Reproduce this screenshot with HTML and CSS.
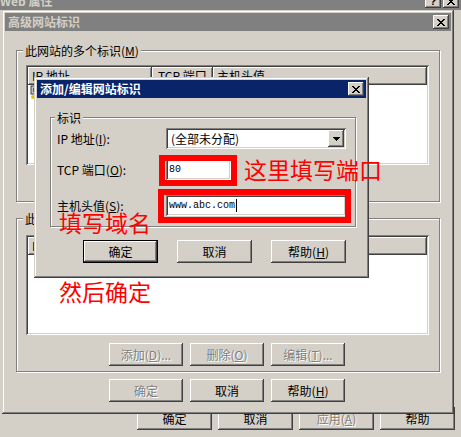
FILE: index.html
```html
<!DOCTYPE html>
<html lang="zh-CN">
<head>
    <meta charset="UTF-8">
    <meta name="viewport" content="width=device-width, initial-scale=1.0">
    <title>高级网站标识</title>
    <link rel="stylesheet" href="styles.css">
</head>
<body>
<div class="desk">

    <!-- back window: site properties -->
    <div class="window win-props">
        <div class="titlebar inactive">
            <span class="title">Web 属性</span>
            <div class="title-btns">
                <span class="title-btn">?</span>
                <span class="title-btn">
                    <svg width="8" height="7" viewBox="0 0 8 7" shape-rendering="crispEdges"><path fill="#000" d="M0 0h2v1h-2z M6 0h2v1h-2z M1 1h2v1h-2z M5 1h2v1h-2z M2 2h4v1h-4z M3 3h2v1h-2z M2 4h4v1h-4z M1 5h2v1h-2z M5 5h2v1h-2z M0 6h2v1h-2z M6 6h2v1h-2z"/></svg>
                </span>
            </div>
        </div>
        <div class="props-footer">
            <button class="btn btn-wide">确定</button>
            <button class="btn btn-wide">取消</button>
            <button class="btn btn-wide" disabled>应用(<u>A</u>)</button>
            <button class="btn btn-wide">帮助</button>
        </div>
    </div>

    <!-- middle window: advanced identities -->
    <div class="window win-advanced">
        <div class="titlebar inactive">
            <span class="title">高级网站标识</span>
            <span class="title-btn">
                <svg width="8" height="7" viewBox="0 0 8 7" shape-rendering="crispEdges"><path fill="#000" d="M0 0h2v1h-2z M6 0h2v1h-2z M1 1h2v1h-2z M5 1h2v1h-2z M2 2h4v1h-4z M3 3h2v1h-2z M2 4h4v1h-4z M1 5h2v1h-2z M5 5h2v1h-2z M0 6h2v1h-2z M6 6h2v1h-2z"/></svg>
            </span>
        </div>
        <div class="advanced-body">
            <div class="group group-http">
                <span class="legend">此网站的多个标识(<u>M</u>)</span>
                <div class="list">
                    <div class="list-head">
                        <span class="col col-ip">IP 地址</span>
                        <span class="col col-port">TCP 端口</span>
                        <span class="col col-host">主机头值</span>
                    </div>
                    <div class="list-row">
                        <svg width="16" height="16" viewBox="0 0 16 16">
                            <rect x="1" y="1" width="11" height="8" fill="#c0c0c0" stroke="#404040"/>
                            <rect x="3" y="3" width="7" height="4" fill="#008080"/>
                            <circle cx="3" cy="12" r="2" fill="#e8c000"/>
                        </svg>
                    </div>
                </div>
                <div class="group-buttons">
                    <button class="btn">添加(<u>D</u>)...</button>
                    <button class="btn">删除(<u>R</u>)</button>
                    <button class="btn">编辑(<u>I</u>)...</button>
                </div>
            </div>

            <div class="group group-ssl">
                <span class="legend">此网站的多个 SSL 标识(<u>S</u>)</span>
                <div class="list">
                    <div class="list-head">
                        <span class="col col-ip">IP 地址</span>
                        <span class="col col-port">SSL 端口</span>
                        <span class="col col-host"></span>
                    </div>
                </div>
                <div class="group-buttons">
                    <button class="btn" disabled>添加(<u>D</u>)...</button>
                    <button class="btn" disabled>删除(<u>O</u>)</button>
                    <button class="btn" disabled>编辑(<u>T</u>)...</button>
                </div>
            </div>

            <div class="main-buttons">
                <button class="btn" disabled>确定</button>
                <button class="btn">取消</button>
                <button class="btn">帮助(<u>H</u>)</button>
            </div>
        </div>
    </div>

    <!-- front window: add / edit identity -->
    <div class="window win-edit">
        <div class="titlebar active">
            <span class="title">添加/编辑网站标识</span>
            <span class="title-btn">
                <svg width="8" height="7" viewBox="0 0 8 7" shape-rendering="crispEdges"><path fill="#000" d="M0 0h2v1h-2z M6 0h2v1h-2z M1 1h2v1h-2z M5 1h2v1h-2z M2 2h4v1h-4z M3 3h2v1h-2z M2 4h4v1h-4z M1 5h2v1h-2z M5 5h2v1h-2z M0 6h2v1h-2z M6 6h2v1h-2z"/></svg>
            </span>
        </div>
        <div class="edit-body">
            <div class="group group-ident">
                <span class="legend">标识</span>
                <div class="field-row row-ip">
                    <span class="field-label">IP 地址(<u>I</u>):</span>
                    <div class="field combo">
                        <span>(全部未分配)</span>
                        <span class="drop">
                            <svg width="7" height="4" viewBox="0 0 7 4" shape-rendering="crispEdges"><path fill="#000" d="M0 0h7v1h-7z M1 1h5v1h-5z M2 2h3v1h-3z M3 3h1v1h-1z"/></svg>
                        </span>
                    </div>
                </div>
                <div class="field-row row-port">
                    <span class="field-label">TCP 端口(<u>O</u>):</span>
                    <div class="field input-port"><span class="mono">80</span></div>
                </div>
                <div class="field-row row-host">
                    <span class="field-label">主机头值(<u>S</u>):</span>
                    <div class="field input-host"><span class="mono">www.abc.com</span><span class="caret"></span></div>
                </div>
            </div>
            <div class="edit-buttons">
                <button class="btn btn-wide btn-default">确定</button>
                <button class="btn btn-wide">取消</button>
                <button class="btn btn-wide">帮助(<u>H</u>)</button>
            </div>
        </div>
    </div>

    <!-- red notes drawn over the screenshot -->
    <div class="mark mark-port"></div>
    <div class="mark mark-host"></div>
    <div class="note note-port">这里填写端口</div>
    <div class="note note-domain">填写域名</div>
    <div class="note note-confirm">然后确定</div>

</div>
</body>
</html>
```

FILE: styles.css
```css
body {
    margin: 0;
    background: #d4d0c8;
    font-family: "Noto Sans CJK SC", sans-serif;
    font-size: 12px;
    color: #000;
}

.desk {
    position: relative;
    width: 461px;
    height: 437px;
    overflow: hidden;
}

/* classic window frame */
.window {
    position: absolute;
    box-sizing: border-box;
    display: flex;
    flex-direction: column;
    padding: 3px;
    background: #d4d0c8;
    box-shadow: inset -1px -1px #404040, inset 1px 1px #d4d0c8, inset -2px -2px #808080, inset 2px 2px #fff;
}

.win-props {
    left: -3px;
    top: -11px;
    width: 467px;
    height: 455px;
}

.win-advanced {
    left: 2px;
    top: 10px;
    width: 452px;
    height: 404px;
}

.win-edit {
    left: 34px;
    top: 77px;
    width: 335px;
    height: 201px;
}

.titlebar {
    flex-shrink: 0;
    display: flex;
    align-items: center;
    justify-content: space-between;
    height: 18px;
    padding: 0 2px 0 3px;
}

.win-props .titlebar {
    padding-left: 0;
}

.titlebar.inactive {
    background: #808080;
    color: #d4d0c8;
}

.titlebar.active {
    background: #0a246a;
    color: #fff;
}

.title {
    font-weight: bold;
    line-height: 18px;
    white-space: nowrap;
}

.title-btns {
    display: flex;
    gap: 2px;
}

.title-btn {
    box-sizing: border-box;
    display: flex;
    align-items: center;
    justify-content: center;
    width: 16px;
    height: 14px;
    background: #d4d0c8;
    box-shadow: inset -1px -1px #404040, inset 1px 1px #fff, inset -2px -2px #808080;
    color: #000;
    font-family: "Liberation Sans", sans-serif;
    font-weight: bold;
    font-size: 11px;
    line-height: 14px;
}

/* buttons */
.btn {
    box-sizing: border-box;
    width: 74px;
    height: 23px;
    padding: 0;
    border: 0;
    background: #d4d0c8;
    box-shadow: inset -1px -1px #404040, inset 1px 1px #fff, inset -2px -2px #808080;
    font-family: "Noto Sans CJK SC", sans-serif;
    font-size: 12px;
    color: #000;
}

.btn-wide {
    width: 75px;
}

.btn-default {
    box-shadow: inset 0 0 0 1px #000, inset -2px -2px #404040, inset 2px 2px #fff, inset -3px -3px #808080;
}

.btn:disabled {
    color: #808080;
    text-shadow: 1px 1px 0 #fff;
}

.props-footer {
    display: flex;
    justify-content: flex-end;
    gap: 6px;
    margin-top: auto;
    padding: 0 6px 11px 0;
}

/* etched group boxes */
.group {
    border: 1px solid #808080;
    box-shadow: inset 1px 1px #fff, 1px 1px #fff;
}

.legend {
    display: block;
    width: max-content;
    height: 13px;
    margin-top: -7px;
    padding: 0 2px;
    background: #d4d0c8;
    line-height: 13px;
    white-space: nowrap;
}

.advanced-body {
    padding: 19px 11px 0 11px;
}

.group-http,
.group-ssl {
    padding: 0 10px 6px 9px;
}

.group-http .legend,
.group-ssl .legend {
    margin-left: -3px;
}

.group-http .list {
    margin-top: 8px;
}

.group-ssl {
    margin-top: 16px;
    padding-bottom: 5px;
}

.group-ssl .list {
    margin-top: 10px;
}

/* list views */
.list {
    box-sizing: border-box;
    height: 100px;
    padding: 2px;
    background: #fff;
    box-shadow: inset 1px 1px #808080, inset -1px -1px #fff, inset 2px 2px #404040, inset -2px -2px #d4d0c8;
}

.list-head {
    display: flex;
    height: 18px;
}

.col {
    box-sizing: border-box;
    height: 18px;
    padding-left: 4px;
    background: #d4d0c8;
    box-shadow: inset -1px -1px #404040, inset 1px 1px #fff, inset -2px -2px #808080;
    line-height: 18px;
    white-space: nowrap;
}

.col-ip {
    width: 124px;
}

.col-port {
    width: 61px;
    padding-left: 6px;
}

.col-host {
    flex: 1;
}

.list-row {
    display: flex;
    align-items: center;
    height: 16px;
    padding-left: 2px;
}

.group-buttons {
    display: flex;
    gap: 7px;
    margin-top: 7px;
    padding-left: 83px;
}

.group-ssl .group-buttons {
    margin-top: 8px;
}

.main-buttons {
    display: flex;
    gap: 7px;
    margin-top: 7px;
    padding-left: 93px;
}

/* add / edit dialog */
.edit-body {
    padding: 19px 10px 0 13px;
}

.group-ident {
    padding: 0 9px 10px 6px;
}

.group-ident .legend {
    margin-left: -2px;
}

.field-row {
    display: flex;
    align-items: center;
    height: 21px;
}

.row-ip {
    margin-top: 4px;
}

.row-port {
    margin-top: 10px;
}

.row-host {
    margin-top: 15px;
}

.field-label {
    width: 109px;
    white-space: nowrap;
}

.field {
    box-sizing: border-box;
    display: flex;
    align-items: center;
    height: 21px;
    padding: 0 2px 0 3px;
    background: #fff;
    box-shadow: inset 1px 1px #808080, inset -1px -1px #fff, inset 2px 2px #404040, inset -2px -2px #d4d0c8;
    white-space: nowrap;
}

.combo {
    width: 180px;
    padding-left: 5px;
}

.drop {
    box-sizing: border-box;
    display: flex;
    align-items: center;
    justify-content: center;
    width: 16px;
    height: 17px;
    margin-left: auto;
    background: #d4d0c8;
    box-shadow: inset -1px -1px #404040, inset 1px 1px #fff, inset -2px -2px #808080;
}

.input-port {
    width: 65px;
}

.input-host {
    width: 180px;
}

.mono {
    font-family: "Liberation Mono", monospace;
    font-size: 10px;
}

.caret {
    width: 1px;
    height: 13px;
    margin-left: 1px;
    background: #000;
}

.edit-buttons {
    display: flex;
    gap: 19px;
    margin-top: 13px;
    padding-left: 33px;
}

/* red annotations */
.mark {
    position: absolute;
    box-sizing: border-box;
    border: 6px solid #f00;
}

.mark-port {
    left: 159px;
    top: 155px;
    width: 78px;
    height: 31px;
}

.mark-host {
    left: 158px;
    top: 189px;
    width: 193px;
    height: 34px;
}

.note {
    position: absolute;
    color: #f00;
    font-size: 23px;
    line-height: 1;
    white-space: nowrap;
}

.note-port {
    left: 244px;
    top: 158px;
}

.note-domain {
    left: 59px;
    top: 211px;
}

.note-confirm {
    left: 59px;
    top: 280px;
}
```
